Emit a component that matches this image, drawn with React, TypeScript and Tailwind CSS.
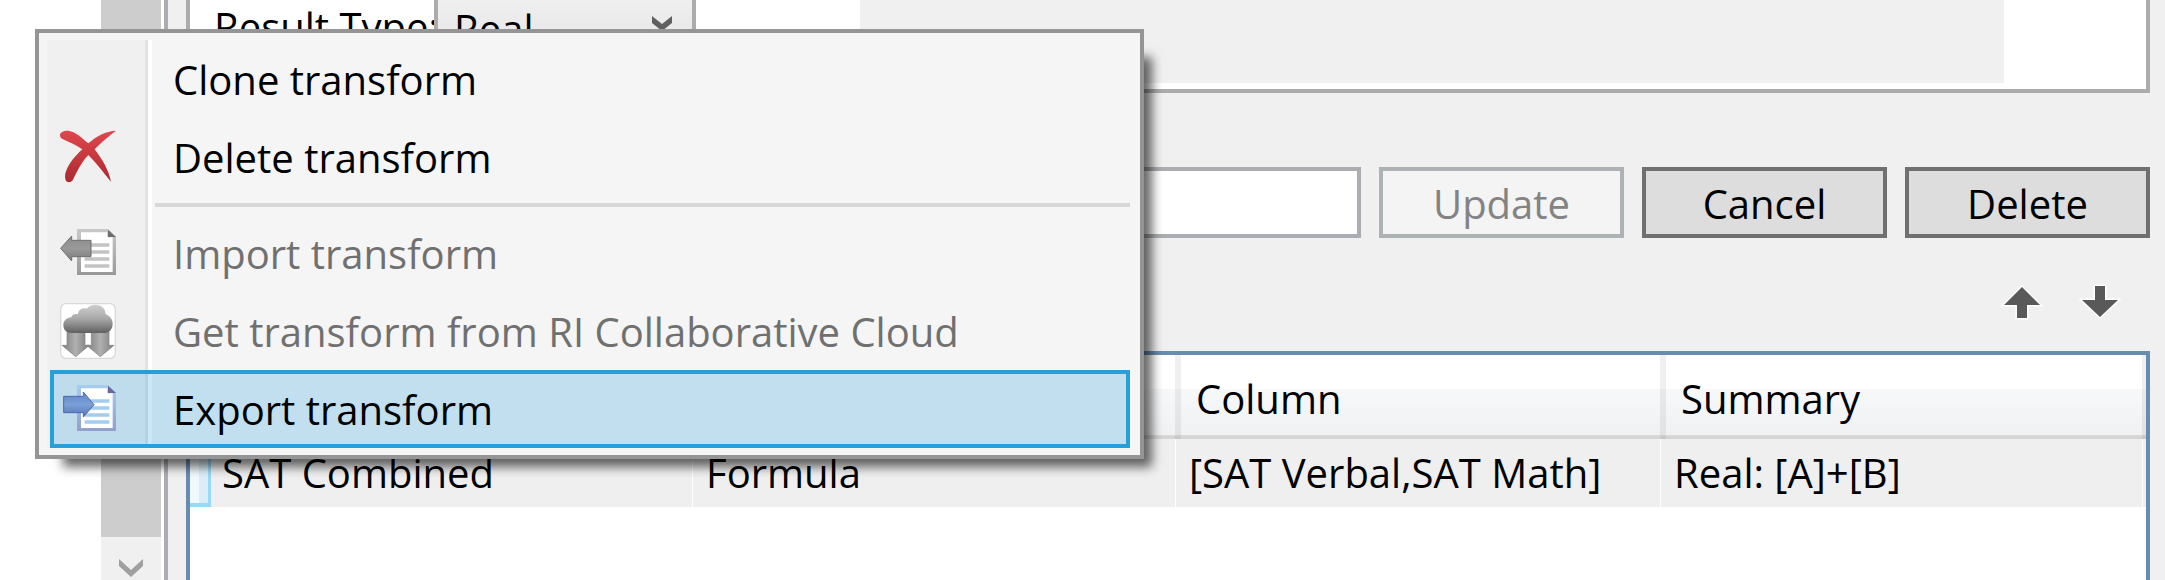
import type { ReactNode } from "react";
import { twMerge } from "tailwind-merge";

interface MenuItemProps {
  icon?: ReactNode;
  name: string;
  disabled?: boolean;
  active?: boolean;
}

const DeleteIcon = () => (
  <svg viewBox="0 0 168 168" className="size-14">
    <defs>
      <linearGradient id="cross" x1="0" y1="0" x2="0" y2="1">
        <stop offset="0" stopColor="#e0474c" />
        <stop offset="1" stopColor="#ab2a30" />
      </linearGradient>
    </defs>
    <path
      fill="url(#cross)"
      d="M0 19C0 9 14 4 28 6C50 10 66 28 85 43C108 22 138 6 168 5C146 21 124 40 104 61C126 90 146 122 153 158C132 134 110 102 85 78C62 102 50 130 38 154C32 162 18 162 16 150C11 120 42 84 67 61C46 46 24 38 6 29C2 27 0 23 0 19Z"
    />
  </svg>
);

const DocumentIcon = ({ direction }: { direction: "in" | "out" }) => {
  const gray = direction === "in";
  const id = `page-${direction}`;

  return (
    <svg viewBox="0 0 168 168" className="size-14">
      <defs>
        <linearGradient id={id} x1="0" y1="0" x2="0" y2="1">
          <stop offset="0" stopColor={gray ? "#c9c9c9" : "#a6cdf0"} />
          <stop offset="1" stopColor={gray ? "#999999" : "#929fcc"} />
        </linearGradient>
        <linearGradient id={`${id}-arrow`} x1="0" y1="0" x2="0" y2="1">
          <stop offset="0" stopColor={gray ? "#8c8c8c" : "#5f84c6"} />
          <stop offset="0.5" stopColor={gray ? "#999999" : "#7ba0d8"} />
          <stop offset="1" stopColor={gray ? "#7c7c7c" : "#5576b8"} />
        </linearGradient>
      </defs>
      <path fill={`url(#${id})`} d="M51 12H144L168 36V150H51Z" />
      <path fill="#fff" d="M63 22H142V37H158V141H63Z" />
      <path fill={gray ? "#6e6e6e" : "#6a64a0"} d="M144 14V36H168Z" />
      <path
        stroke={gray ? "#c3c3c3" : "#a3cdf0"}
        strokeWidth="11"
        d="M74 60H148M74 81H148M74 102H148M74 123H148"
      />
      <path
        fill={`url(#${id}-arrow)`}
        stroke={gray ? "#6f6f6f" : "#4a69b0"}
        strokeWidth="3"
        d={
          gray
            ? "M2 70L35 33V46H93V95H35V108Z"
            : "M102 71L70 33V46H11V95H70V108Z"
        }
      />
    </svg>
  );
};

const CloudIcon = () => (
  <svg viewBox="0 0 168 168" className="size-14">
    <defs>
      <linearGradient id="cloud" x1="0" y1="0" x2="0" y2="1">
        <stop offset="0" stopColor="#cfcfcf" />
        <stop offset="0.5" stopColor="#a8a8a8" />
        <stop offset="1" stopColor="#606060" />
      </linearGradient>
      <linearGradient id="fall" x1="0" y1="0" x2="1" y2="0">
        <stop offset="0" stopColor="#7c7c7c" />
        <stop offset="0.5" stopColor="#b0b0b0" />
        <stop offset="1" stopColor="#7c7c7c" />
      </linearGradient>
    </defs>
    <rect
      x="2"
      y="2"
      width="164"
      height="164"
      rx="16"
      fill="#fff"
      stroke="#d9d9d9"
      strokeWidth="4"
    />
    <path
      fill="url(#fall)"
      stroke="#808080"
      strokeWidth="2"
      d="M21 80H75V127H88L47 161L6 127H21Z"
    />
    <path
      fill="url(#fall)"
      stroke="#808080"
      strokeWidth="2"
      d="M94 80H147V127H162L121 161L80 127H94Z"
    />
    <path
      fill="url(#cloud)"
      d="M34 90C18 90 10 79 10 66C10 53 20 44 34 43C34 36 44 31 54 34C54 22 66 13 80 17C86 9 96 5 107 5C124 5 137 17 137 34C150 38 158 50 158 62C158 78 148 90 130 90Z"
    />
  </svg>
);

const MoveIcon = ({ path }: { path: string }) => (
  <svg viewBox="0 0 42 42" className="size-[42px]">
    <path
      d={path}
      fill="#595959"
      stroke="#fff"
      strokeWidth="3"
      paintOrder="stroke"
    />
  </svg>
);

const MenuItem = ({ icon, name, disabled, active }: MenuItemProps) => (
  <li>
    <button
      type="button"
      role="menuitem"
      disabled={disabled}
      className={twMerge(
        "flex h-[78px] w-full items-center border-4 border-transparent pl-[6px] text-left text-black",
        disabled ? "text-[#707070]" : "",
        active ? "border-[#26a0da] bg-[#26a0da]/25" : ""
      )}
    >
      <span className="w-[113px] shrink-0">{icon}</span>
      <span className="pt-[2px]">{name}</span>
    </button>
  </li>
);

const MENU_ITEMS: (MenuItemProps | null)[] = [
  { name: "Clone transform" },
  { name: "Delete transform", icon: <DeleteIcon /> },
  null,
  {
    name: "Import transform",
    icon: <DocumentIcon direction="in" />,
    disabled: true,
  },
  {
    name: "Get transform from RI Collaborative Cloud",
    icon: <CloudIcon />,
    disabled: true,
  },
  {
    name: "Export transform",
    icon: <DocumentIcon direction="out" />,
    active: true,
  },
];

const ContextMenu = () => (
  <div className="absolute top-[29px] left-[35px] w-[1109px] border-4 border-[#959595] bg-[#f5f5f5] px-2 py-[7px] shadow-[18px_18px_10px_-10px_rgba(0,0,0,0.6)]">
    <div className="flex bg-linear-to-r from-[#f0f0f0] to-[#f0f0f0] bg-[length:98px_100%] bg-no-repeat">
      <div className="-mr-[105px] ml-[98px] w-[7px] shrink-0 border-r-4 border-l-3 border-r-white border-l-[#e2e2e2]" />
      <ul role="menu" className="mr-[2px] ml-[3px] flex-1">
        {MENU_ITEMS.map((item, index) =>
          item ? (
            <MenuItem key={item.name} {...item} />
          ) : (
            <li key={index} role="separator" className="py-[7px] pl-[105px]">
              <div className="h-1 bg-[#d7d7d7]" />
            </li>
          )
        )}
      </ul>
    </div>
  </div>
);

const ScrollBar = () => (
  <div className="flex w-[60px] flex-col bg-[#f0f0f0]">
    <div className="flex-1 bg-[#cdcdcd]" />
    <button
      type="button"
      aria-label="Scroll down"
      className="flex h-[43px] items-center justify-center pt-[19px]"
    >
      <svg viewBox="0 0 24 18" className="h-[18px] w-6">
        <path d="M0 0L12 11L24 0V7L12 18L0 7Z" fill="#a0a0a0" />
      </svg>
    </button>
  </div>
);

const ResultPanel = () => (
  <section className="flex h-[93px] items-start border-x-4 border-b-4 border-[#acacac] bg-white pb-[6px] pl-6">
    <label
      htmlFor="result-type"
      className="w-[220px] leading-[54px] whitespace-nowrap"
    >
      Result Type:
    </label>
    <div className="relative">
      <select
        id="result-type"
        className="h-[54px] w-[262px] appearance-none border-x-4 border-b-4 border-[#acacac] bg-linear-to-b from-[#efefef] to-[#e5e5e5] pt-[2px] pl-4"
      >
        <option>Real</option>
      </select>
      <svg
        viewBox="0 0 20 15"
        className="pointer-events-none absolute top-4 right-6 h-[15px] w-5"
      >
        <path d="M0 0L10 8L20 0V7L10 15L0 7Z" fill="#606060" />
      </svg>
    </div>
    <div className="mr-[142px] ml-[164px] flex-1 self-stretch bg-[#f0f0f0]" />
  </section>
);

const BUTTON =
  "h-[71px] w-[245px] border-4 border-[#707070] bg-[#dddddd] pt-[2px] text-center disabled:border-[#adb2b5] disabled:bg-[#f4f4f4] disabled:text-[#838383]";

const HEADER_CELL =
  "border-l-6 border-black/6 pt-[3px] pl-[15px] text-left font-normal";
const BODY_CELL = "border-l border-white pl-[13px]";

const TransformTable = () => (
  <div className="flex-1 border-x-4 border-t-4 border-[#688caf] bg-white">
    <table className="w-full table-fixed border-separate border-spacing-0">
      <colgroup>
        <col className="w-[21px]" />
        <col className="w-[481px]" />
        <col className="w-[483px]" />
        <col className="w-[485px]" />
        <col />
        <col className="w-1" />
      </colgroup>
      <thead>
        <tr className="h-[84px] bg-[linear-gradient(#fff_0,#fff_40%,#f7f8fa_40%,#f0f1f3_95%,#d5d5d5_96%)]">
          <td />
          <td className={HEADER_CELL} />
          <td className={HEADER_CELL} />
          <th className={HEADER_CELL}>Column</th>
          <th className={HEADER_CELL}>Summary</th>
          <td className="bg-black/6" />
        </tr>
      </thead>
      <tbody>
        <tr className="h-[68px] bg-[#efefef] leading-[54px]">
          <td className="border-r-3 border-b-4 border-[#99d9f8] bg-linear-to-r from-[#f0f9fd] from-50% to-[#dbeef7] to-50%" />
          <td className="pl-[11px]">SAT Combined</td>
          <td className={BODY_CELL}>Formula</td>
          <td className={BODY_CELL}>[SAT Verbal,SAT Math]</td>
          <td className={BODY_CELL}>Real: [A]+[B]</td>
          <td className="border-l border-white" />
        </tr>
      </tbody>
    </table>
  </div>
);

export default function App() {
  return (
    <div className="relative flex h-screen overflow-hidden bg-white font-['Open_Sans','Noto_Sans',sans-serif] text-[40px] leading-[54px] text-black">
      <aside className="flex w-[168px] justify-end gap-[3px] border-r-4 border-[#abadb3]">
        <ScrollBar />
        <div />
      </aside>
      <main className="flex flex-1 flex-col bg-[#f0f0f0] pr-[15px] pl-[18px]">
        <ResultPanel />
        <div className="mt-[74px] flex gap-[18px]">
          <input
            type="text"
            aria-label="Transform name"
            className="h-[71px] min-w-0 flex-1 border-4 border-[#abadb3] bg-white px-3"
          />
          <button type="button" disabled className={BUTTON}>
            Update
          </button>
          <button type="button" className={BUTTON}>
            Cancel
          </button>
          <button type="button" className={BUTTON}>
            Delete
          </button>
        </div>
        <div className="flex justify-end gap-9 pt-[43px] pr-[29px] pb-7">
          <button type="button" aria-label="Move up">
            <MoveIcon path="M21 6L39 24H26V37H16V24H3Z" />
          </button>
          <button type="button" aria-label="Move down">
            <MoveIcon path="M21 36L39 19H26V5H16V19H3Z" />
          </button>
        </div>
        <TransformTable />
      </main>
      <ContextMenu />
    </div>
  );
}
